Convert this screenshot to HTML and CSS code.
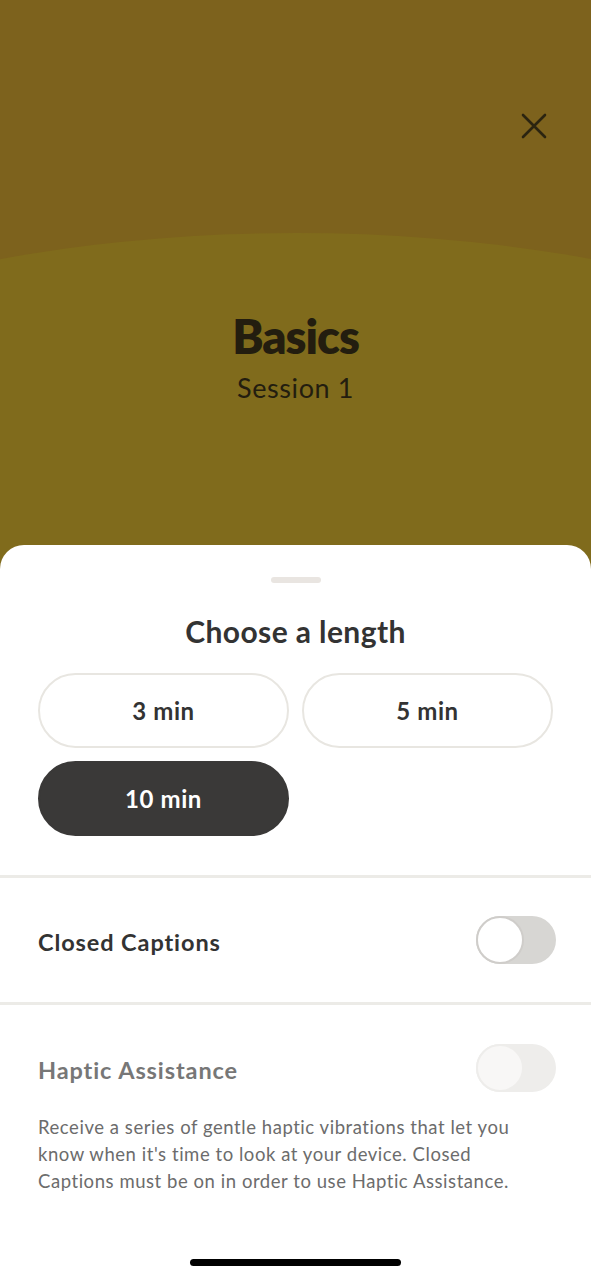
FILE: index.html
```html
<!DOCTYPE html>
<html lang="en">
<head>
  <meta charset="UTF-8" />
  <title>Basics – Session 1</title>
  <link rel="stylesheet" href="styles.css">
</head>
<body>
  <div class="app">
    <!-- Session header -->
    <header class="hero">
      <button class="close-btn" aria-label="Close">
        <svg width="26" height="26" viewBox="0 0 26 26">
          <path d="M2 2 L24 24 M24 2 L2 24" stroke="#2b2410" stroke-width="2.6" stroke-linecap="round" fill="none" />
        </svg>
      </button>
      <div class="hero-text">
        <h1 class="hero-title">Basics</h1>
        <p class="hero-sub">Session 1</p>
      </div>
    </header>

    <!-- Bottom sheet -->
    <section class="sheet">
      <div class="handle"></div>
      <h2 class="sheet-title">Choose a length</h2>
      <div class="lengths">
        <button class="length">3 min</button>
        <button class="length">5 min</button>
        <button class="length selected">10 min</button>
      </div>

      <div class="setting first">
        <span class="setting-label">Closed Captions</span>
        <span class="toggle"><span class="knob"></span></span>
      </div>

      <div class="setting disabled">
        <div class="setting-row">
          <span class="setting-label">Haptic Assistance</span>
          <span class="toggle"><span class="knob"></span></span>
        </div>
        <p class="setting-desc">Receive a series of gentle haptic vibrations that let you know when it's time to look at your device. Closed Captions must be on in order to use Haptic Assistance.</p>
      </div>

      <div class="home-bar"></div>
    </section>
  </div>
</body>
</html>
```

FILE: styles.css
```css
/* Basic reset */
html, body {
  margin: 0;
  padding: 0;
}
body {
  font-family: "Lato", "Open Sans", sans-serif;
  color: #333;
}
.app {
  width: 591px;
  height: 1280px;
  background: #806b1c;
  display: flex;
  flex-direction: column;
  overflow: hidden;
}
/* Header */
.hero {
  position: relative;
  height: 545px;
  flex-shrink: 0;
  background: #7d621d;
  overflow: hidden;
  display: flex;
  flex-direction: column;
  align-items: center;
}
.hero::before {
  content: "";
  position: absolute;
  left: 50%;
  top: 233px;
  width: 1400px;
  height: 560px;
  margin-left: -700px;
  border-radius: 50%;
  background: #806b1c;
}
.close-btn {
  position: absolute;
  top: 113px;
  right: 44px;
  background: none;
  border: none;
  padding: 0;
  z-index: 1;
  line-height: 0;
}
.hero-text {
  position: relative;
  z-index: 1;
  margin-top: 307px;
  text-align: center;
  color: #231d0f;
}
.hero-title {
  margin: 0;
  font-size: 47px;
  font-weight: 800;
  letter-spacing: -1px;
  line-height: 58px;
}
.hero-sub {
  margin: 0;
  font-size: 27px;
  line-height: 46px;
  letter-spacing: 0.6px;
}
/* Sheet */
.sheet {
  flex: 1;
  background: #fff;
  border-radius: 24px 24px 0 0;
  display: flex;
  flex-direction: column;
}
.handle {
  width: 50px;
  height: 6px;
  border-radius: 3px;
  background: #e9e5e1;
  margin: 32px auto 0;
}
.sheet-title {
  margin: 28px 0 0;
  text-align: center;
  font-size: 30px;
  font-weight: 700;
  letter-spacing: 0.4px;
  line-height: 40px;
  color: #333;
}
.lengths {
  display: grid;
  grid-template-columns: 1fr 1fr;
  gap: 13px;
  padding: 0 38px;
  margin-top: 22px;
}
.length {
  height: 75px;
  border-radius: 38px;
  border: 2.5px solid #e8e6e1;
  background: #fff;
  font-family: inherit;
  font-size: 24px;
  font-weight: 700;
  letter-spacing: 0.6px;
  color: #333;
}
.length.selected {
  background: #3a3938;
  border-color: #3a3938;
  color: #fff;
}
/* Settings rows */
.setting {
  border-top: 3px solid #ecebe7;
  padding: 0 35px 0 38px;
}
.setting.first {
  margin-top: 39px;
}
.setting, .setting-row {
  display: flex;
  align-items: center;
  justify-content: space-between;
}
.setting {
  height: 127px;
  box-sizing: border-box;
}
.setting.first .setting-label {
  padding-top: 4px;
}
.setting.disabled {
  display: block;
  height: auto;
  padding-top: 39px;
}
.setting-label {
  font-size: 23.5px;
  font-weight: 700;
  letter-spacing: 0.9px;
}
.disabled .setting-label {
  color: #777;
  padding-top: 3px;
}
.toggle {
  position: relative;
  width: 80px;
  height: 48px;
  border-radius: 24px;
  background: #d7d6d3;
}
.knob {
  position: absolute;
  left: 0;
  top: 0;
  width: 44px;
  height: 44px;
  border-radius: 50%;
  background: #fff;
  border: 2px solid #cfcdca;
}
.disabled .toggle {
  background: #eeedeb;
}
.disabled .knob {
  background: #f8f7f6;
  border-color: #eeedeb;
}
.setting-desc {
  max-width: 490px;
  margin: 22px 0 0;
  font-size: 18.5px;
  line-height: 27px;
  color: #6c6c6c;
  letter-spacing: 0.55px;
}
.home-bar {
  width: 211px;
  height: 7px;
  border-radius: 4px;
  background: #000;
  margin: auto auto 14px;
}
```
